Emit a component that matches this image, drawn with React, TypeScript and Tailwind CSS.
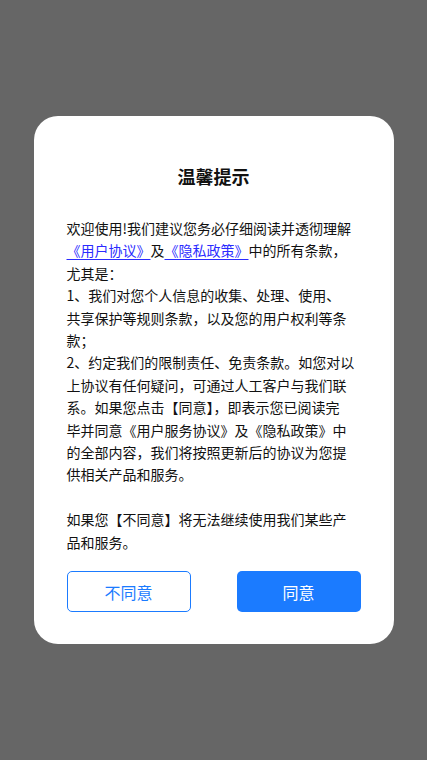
import React from "react";

const linkCls = "text-[#2b2bff] underline underline-offset-[3px]";

const App = () => {
  return (
    <div
      className="flex h-[760px] w-full items-center justify-center bg-[#666666]"
      style={{ fontFamily: '"Noto Sans CJK SC", "Noto Sans", sans-serif' }}
    >
      <div className="flex h-[528px] w-[360px] flex-col rounded-[24px] bg-white pl-[33px] pr-[27px]">
        <h3 className="mt-[47px] text-center pr-[6px] text-[18px] font-bold leading-[26px] text-[#111]">
          温馨提示
        </h3>
        <div className="mt-[28px] whitespace-nowrap text-[14px] leading-[22.4px] text-[#111]">
          <p>
            欢迎使用!我们建议您务必仔细阅读并透彻理解
            <br />
            <a className={linkCls}>《用户协议》</a>及<a className={linkCls}>《隐私政策》</a>中的所有条款，
            <br />
            尤其是：
            <br />
            1、我们对您个人信息的收集、处理、使用、
            <br />
            共享保护等规则条款，以及您的用户权利等条
            <br />
            款；
            <br />
            2、约定我们的限制责任、免责条款。如您对以
            <br />
            上协议有任何疑问，可通过人工客户与我们联
            <br />
            系。如果您点击【同意】，即表示您已阅读完
            <br />
            毕并同意《用户服务协议》及《隐私政策》中
            <br />
            的全部内容，我们将按照更新后的协议为您提
            <br />
            供相关产品和服务。
          </p>
          <p className="mt-[22.4px]">
            如果您【不同意】将无法继续使用我们某些产
            <br />
            品和服务。
          </p>
        </div>
        <div className="mt-auto mb-[32px] mr-[6px] flex justify-between">
          <button className="h-[41px] w-[124px] rounded-[5px] border border-[#1b7bff] text-[16px] text-[#1b7bff]">
            不同意
          </button>
          <button className="h-[41px] w-[124px] rounded-[5px] bg-[#1b7bff] text-[16px] text-white">
            同意
          </button>
        </div>
      </div>
    </div>
  );
};

export default App;
